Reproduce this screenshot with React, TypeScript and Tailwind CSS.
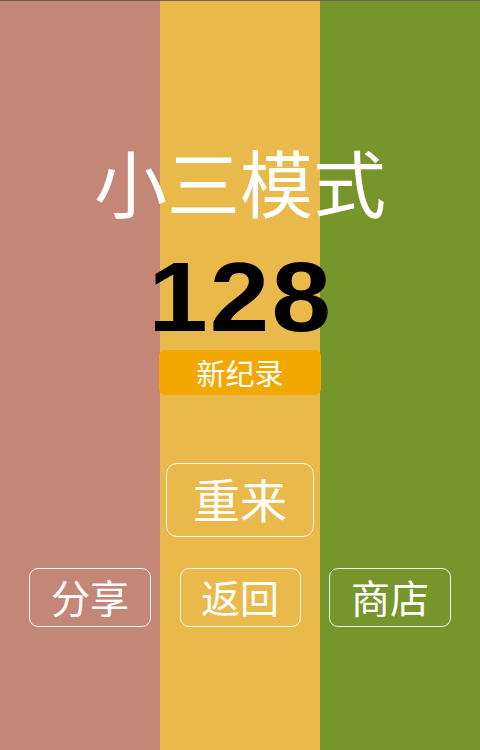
import React from "react";

const cjk = { fontFamily: '"Noto Sans CJK SC", "Noto Sans", sans-serif' };

export default function App() {
  return (
    <div className="relative w-[480px] h-[750px] overflow-hidden border-t border-[#6b5f57]">
      <div className="absolute inset-0 flex">
        <div className="w-[160px] bg-[#c48676]" />
        <div className="w-[160px] bg-[#eab94b]" />
        <div className="w-[160px] bg-[#76952b]" />
      </div>
      <div className="relative flex flex-col items-center text-white" style={cjk}>
        <div className="mt-[139px] h-[80px] leading-[80px] text-[73px]">小三模式</div>
        <div
          className="mt-[32px] h-[90px] leading-[90px] text-[99px] font-bold text-black tracking-[2px] pl-[2px] scale-x-[1.08]"
          style={{ fontFamily: '"Liberation Sans", Arial, sans-serif' }}
        >
          128
        </div>
        <div className="mt-[8px] w-[162px] h-[45px] rounded-[6px] bg-[#f2a800] flex items-center justify-center text-[29px]">
          新纪录
        </div>
        <div className="mt-[68px] w-[148px] h-[74px] rounded-[11px] border-[1.5px] border-white/90 flex items-center justify-center text-[47px] pb-[3px]">
          重来
        </div>
        <div className="mt-[31px] w-full flex justify-between px-[29px]">
          <div className="w-[122px] h-[59px] rounded-[9px] border border-white/90 flex items-center justify-center text-[39px] pb-[3px]">
            分享
          </div>
          <div className="w-[121px] h-[59px] rounded-[9px] border border-white/90 flex items-center justify-center text-[39px] pb-[3px]">
            返回
          </div>
          <div className="w-[122px] h-[59px] rounded-[9px] border border-white/90 flex items-center justify-center text-[39px] pb-[3px]">
            商店
          </div>
        </div>
      </div>
    </div>
  );
}
